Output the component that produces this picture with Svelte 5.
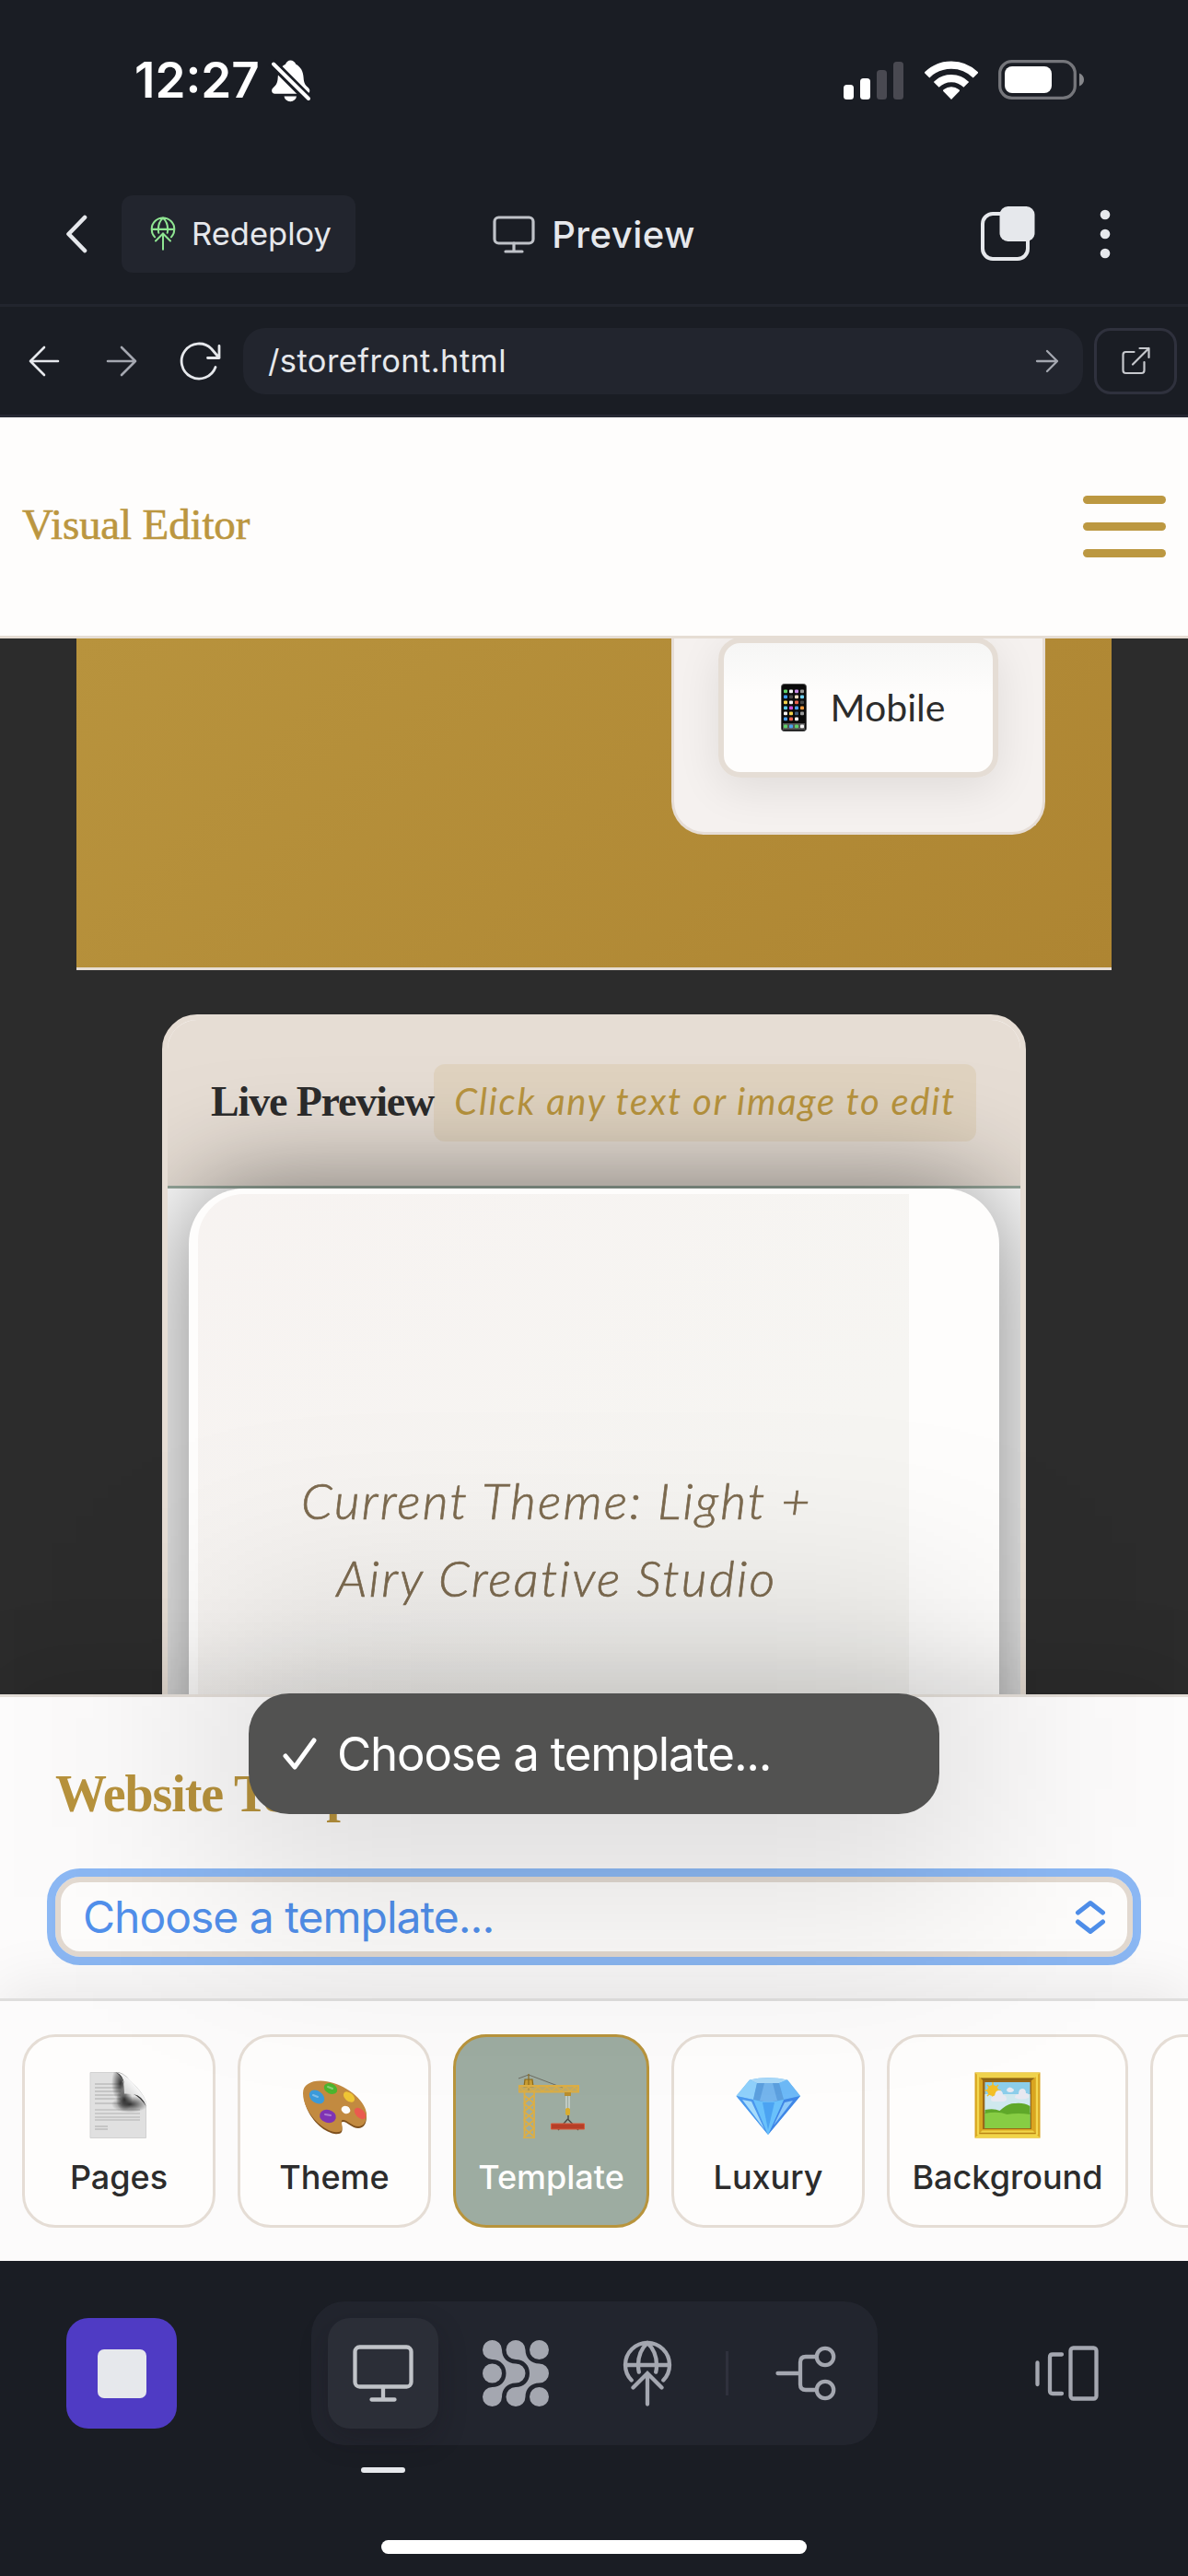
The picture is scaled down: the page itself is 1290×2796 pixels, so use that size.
<script>
  const tabs = [
    { label: 'Pages', icon: 'pages' },
    { label: 'Theme', icon: 'palette' },
    { label: 'Template', icon: 'crane', active: true },
    { label: 'Luxury', icon: 'gem' },
    { label: 'Background', icon: 'frame', wide: true },
    { label: '', icon: '' }
  ];

  // App colours on the phone's home screen, row by row
  const apps = [
    ['#5fd068', '#f4f4f4', '#c88be8', '#9a9a9a'],
    ['#3e9bf0', '#4a4a4a', '#f0dcc0', '#6fd0f0'],
    ['#f2d24b', '#f4f4f4', '#e8604c', '#4a4a4a'],
    ['#5ac8e8', '#d14bd8', '#4aa0f0', '#f09a3e'],
    ['#f4f4f4', '#f2d24b', '#3e5a78', '#9a9a9a'],
    ['#4aa0f0', '#e8604c', '#f4f4f4', '#0b0b0b'],
    ['#5fd068', '#4aa0f0', '#5fd068', '#f4f4f4']
  ];

  const letterLines = [13, 17, 21, 25, 29, 34, 41, 45, 49, 52, 59, 62];
</script>

{#snippet globe()}
  <path
    d="M9.7 43.5A24 24 0 1 1 44.3 43.5M3 27H51M27 3C20.5 9 17 17 17 27c0 3 .2 5.400.8 7.600M27 3c6.500 6 10 14 10 24c0 3-.2 5.400-.8 7.600M27 37V69.500M11.500 51.500L27 36l15.500 15.500"
  />
{/snippet}

<div class="screen">
  <header class="status">
    <span class="time">12:27</span>
    <svg class="bell" width="48" height="56" viewBox="0 0 48 56">
      <path
        fill="#fff"
        d="M25.300 5.500c2.800 0 5 1.800 6 4.200c5 2.600 8 7.500 8.300 14.500c.3 5.500 1.500 7.700 4.700 10.500c1.500 1.500 2 2.500 2 3.600c0 2-1.200 3.400-3.400 3.400H8.500c-2.200 0-3.400-1.400-3.400-3.400c0-1.200.6-2.300 2-3.600c3-2.800 4.300-5 4.600-10.500c.3-7 3.300-12 8.300-14.500c1-2.400 3-4.200 5.300-4.200zM18.500 44.500h13.500a6.800 6.500 0 0 1-13.500 0z"
      />
      <path d="M5 7.500L47 49.500" stroke="#1a1d24" stroke-width="10" />
      <path d="M7 9.500L45 47" stroke="#fff" stroke-width="4" stroke-linecap="round" />
    </svg>
    <span class="grow"></span>
    <svg width="66" height="44" viewBox="0 0 66 44">
      <rect x="0" y="27" width="11" height="16" rx="3.500" fill="#fff" />
      <rect x="18" y="20" width="11" height="23" rx="3.500" fill="#fff" />
      <rect x="36" y="11" width="11" height="32" rx="3.500" fill="#494951" />
      <rect x="54" y="2" width="11" height="41" rx="3.500" fill="#494951" />
    </svg>
    <svg class="wifi" width="58" height="44" viewBox="0 0 58 44">
      <g fill="none" stroke="#fff" stroke-width="8.200">
        <path d="M2.400 16.600A37.600 37.600 0 0 1 55.600 16.600" />
        <path d="M12.700 26.900A23 23 0 0 1 45.300 26.900" />
      </g>
      <path d="M29 43L20 33.800Q19.800 32.600 21 32a13.500 13.500 0 0 1 16 0Q38.200 32.600 38 33.800z" fill="#fff" />
    </svg>
    <svg width="94" height="44" viewBox="0 0 94 44">
      <rect x="1.700" y="1.700" width="81.600" height="39.600" rx="13" fill="none" stroke="#75767b" stroke-width="3.300" />
      <rect x="7" y="7" width="51" height="29" rx="8" fill="#fff" />
      <path d="M88 14.500c3.500 1.500 5 4 5 7s-1.500 5.500-5 7z" fill="#86878b" />
    </svg>
  </header>

  <nav class="appbar">
    <div class="side">
      <svg class="back" width="26" height="44" viewBox="0 0 26 44">
        <path d="M21 4L3.500 22L21 40" fill="none" stroke="#e6e8ec" stroke-width="4.600" stroke-linecap="round" stroke-linejoin="round" />
      </svg>
      <button class="redeploy">
        <svg width="28" height="37" viewBox="0 0 54 72" fill="none" stroke="#8fe592" stroke-width="3.900" stroke-linecap="round">
          {@render globe()}
        </svg>
        <span>Redeploy</span>
      </button>
    </div>
    <div class="title">
      <svg width="46" height="44" viewBox="0 0 46 44" fill="none" stroke="#bfc2c8" stroke-width="3.200" stroke-linecap="round">
        <rect x="2" y="4" width="42" height="28" rx="4.500" />
        <path d="M23 32v8M14 41h18" />
      </svg>
      <span>Preview</span>
    </div>
    <div class="side end">
      <svg width="62" height="64" viewBox="0 0 62 64">
        <rect x="4" y="10" width="49" height="49" rx="11" fill="none" stroke="#e6e8ec" stroke-width="4" />
        <rect x="22.500" y="2" width="38" height="38" rx="9" fill="#e6e8ec" />
      </svg>
      <svg class="dots" width="12" height="56" viewBox="0 0 12 56" fill="#e6e8ec">
        <circle cx="6" cy="7" r="5.300" />
        <circle cx="6" cy="28" r="5.300" />
        <circle cx="6" cy="49" r="5.300" />
      </svg>
    </div>
  </nav>

  <div class="urlbar">
    <svg width="34" height="34" viewBox="0 0 34 34" fill="none" stroke="#e6e8ec" stroke-width="2.600" stroke-linecap="round" stroke-linejoin="round">
      <path d="M32 17H2M17 2L2 17l15 15" />
    </svg>
    <svg class="fwd" width="34" height="34" viewBox="0 0 34 34" fill="none" stroke="#a4a7b0" stroke-width="2.600" stroke-linecap="round" stroke-linejoin="round">
      <path d="M2 17h30M17 2l15 15l-15 15" />
    </svg>
    <svg class="reload" width="46" height="42" viewBox="0 0 46 42" fill="none" stroke="#e6e8ec" stroke-width="2.800" stroke-linecap="round" stroke-linejoin="round">
      <path d="M39 27.500A19 19 0 1 1 34.500 7.500L43 17.500M43 4.500v13H30.500" />
    </svg>
    <div class="field">
      <span>/storefront.html</span>
      <svg width="26" height="26" viewBox="0 0 26 26" fill="none" stroke="#a4a7b0" stroke-width="2.300" stroke-linecap="round" stroke-linejoin="round">
        <path d="M2 13h22M13 2l11 11l-11 11" />
      </svg>
    </div>
    <button class="open" aria-label="Open in new tab">
      <svg width="32" height="32" viewBox="0 0 32 32" fill="none" stroke="#c6c8cd" stroke-width="2.200" stroke-linecap="round" stroke-linejoin="round">
        <path d="M14.500 6H5.500Q2.500 6 2.500 9V26Q2.500 29 5.500 29H22.500Q25.500 29 25.500 26V17M20.500 2h10v10M30.500 2L13 19.500" />
      </svg>
    </button>
  </div>

  <div class="editor-head">
    <span>Visual Editor</span>
    <div class="burger"><i></i><i></i><i></i></div>
  </div>

  <main class="canvas">
    <section class="hero">
      <div class="devices">
        <div class="device">
          <svg width="28" height="52" viewBox="0 0 28 52">
            <rect x=".5" y=".5" width="27" height="51" rx="3" fill="#0b0b0b" stroke="#555" />
            <rect x="2" y="43" width="24" height="7" fill="#555" />
            {#each apps as row, r}
              {#each row as colour, c}
                <rect x={3 + c * 6} y={6.500 + r * 6 + (r === 6 ? 2 : 0)} width="4" height="3.800" rx="1" fill={colour} />
              {/each}
            {/each}
          </svg>
          <span>Mobile</span>
        </div>
      </div>
    </section>

    <section class="preview">
      <div class="preview-head">
        <h2>Live Preview</h2>
        <em>Click any text or image to edit</em>
      </div>
      <div class="stage">
        <div class="phone">
          <div class="page">
            <p>Current Theme: Light +<br />Airy Creative Studio</p>
          </div>
        </div>
      </div>
    </section>
  </main>

  <section class="panel">
    <h3>Website Templates</h3>
    <div class="select">
      <span>Choose a template...</span>
      <svg width="34" height="38" viewBox="0 0 34 38" fill="none" stroke="#4f8fea" stroke-width="5" stroke-linecap="round" stroke-linejoin="round">
        <path d="M3.500 14L17 3.500L30.500 14M3.500 24L17 34.500L30.500 24" />
      </svg>
    </div>
    <div class="popup">
      <svg width="38" height="36" viewBox="0 0 38 36" fill="none" stroke="#fff" stroke-width="5" stroke-linecap="round" stroke-linejoin="round">
        <path d="M3 20l10 12L34 3" />
      </svg>
      <span>Choose a template...</span>
    </div>
  </section>

  <nav class="tabs">
    {#each tabs as tab}
      <div class="tab" class:active={tab.active} class:wide={tab.wide}>
        {#if tab.icon}
          <svg width="72" height="72" viewBox="0 0 72 72">
            {#if tab.icon === 'pages'}
              <defs>
                <linearGradient id="curl" x1="0" y1="1" x2="1" y2="0">
                  <stop offset="0" stop-color="#8a8a8a" />
                  <stop offset=".3" stop-color="#d2d2d2" />
                  <stop offset=".6" stop-color="#f6f6f6" />
                  <stop offset="1" stop-color="#cfcfcf" />
                </linearGradient>
                <radialGradient id="fold">
                  <stop offset="0" stop-color="#222" stop-opacity=".9" />
                  <stop offset="1" stop-color="#222" stop-opacity="0" />
                </radialGradient>
                <clipPath id="sheet"><path d="M5 0H36Q44 2 54 15T66 38V72H5z" /></clipPath>
              </defs>
              <path d="M5 .5H34Q42 2 54 15T65.500 36V71.500H5z" fill="#e0e0e0" stroke="#d2d2d2" stroke-width="1" />
              {#each letterLines as y}
                <path d="M10 {y}H{y < 36 ? 38 : y > 55 ? 24 : 59}" stroke="#b2b2b2" stroke-width="1.200" />
              {/each}
              <g clip-path="url(#sheet)">
                <ellipse cx="38" cy="12" rx="10" ry="20" fill="url(#fold)" />
                <ellipse cx="48" cy="35" rx="20" ry="9" fill="url(#fold)" />
                <ellipse cx="42" cy="30" rx="9" ry="12" fill="url(#fold)" />
              </g>
              <path d="M34 .5Q42 5 42 23.500Q60 23 65.500 36Q67 30 54 15T34 .5z" fill="url(#curl)" />
              <path d="M33 .5Q41 3 42 14Q40 5 33 .5zM52 24Q62 26 65.500 37Q60 28 52 24z" fill="#333" />
            {:else if tab.icon === 'palette'}
              <path d="M3 25C3 15 11 11 22 11C42 11 70 30 71 48C71 56 68 61 62 61C55 61 49 53 45 54C42 55 46 61 44 65C43 67 40 67.500 36 67C20 64 3 43 3 25z" fill="#7e501d" />
              <path d="M2 23C2 14 10 9.500 21 9.500C42 9.500 70 28 71 46C71 54 68 59 62 59C55 59 49 51 45 52C42 53 46 59 44 63C43 65 40 65.500 36 65C20 62 2 41 2 23z" fill="#c28a40" />
              <ellipse cx="48.500" cy="41" rx="5" ry="4" fill="#fdfcfb" transform="rotate(25 48.500 41)" />
              <ellipse cx="32" cy="18" rx="7.500" ry="5.500" fill="#4cb52e" transform="rotate(25 32 18)" />
              <ellipse cx="17" cy="27" rx="9" ry="6.500" fill="#3b9ada" transform="rotate(35 17 27)" />
              <ellipse cx="29" cy="48" rx="9" ry="7" fill="#7f33b4" transform="rotate(15 29 48)" />
              <ellipse cx="52" cy="27" rx="7" ry="4.500" fill="#efc534" transform="rotate(40 52 27)" />
              <ellipse cx="64" cy="45" rx="7.500" ry="4.500" fill="#ea5a4e" transform="rotate(45 64 45)" />
              <path d="M29 16l5 2M13 25l5 2M26 46l6 1" stroke="#fff" stroke-opacity=".35" stroke-width="2" stroke-linecap="round" />
            {:else if tab.icon === 'crane'}
              <path d="M0 7L11 3L48 17" fill="none" stroke="#6c6c62" stroke-width="1" />
              <path d="M11 2v18M7 8h8l1 8H6z" fill="#c79c34" stroke="#8a6a1e" stroke-width="1.200" />
              <path d="M0 15H65V21.500H0z" fill="#d9a93e" fill-opacity=".55" stroke="#dcae45" stroke-width="2" />
              <path d="M1 16l5 5l5-5l5 5l5-5l5 5l5-5l5 5l5-5l5 5l5-5l5 5l5-5l4 5" fill="none" stroke="#dcae45" stroke-width="1.200" />
              <path d="M6.500 21V72M17 21V72M6 25l11 9l-11 9l11 9l-11 9l11 9M17 25L6 34l11 9L6 52l11 9L6 70M5 71.500h13" fill="none" stroke="#dcae45" stroke-width="1.800" />
              <rect x="50" y="22" width="7" height="4" fill="#b98e2f" />
              <path d="M52 26V40M55 26V40" stroke="#d3dad6" stroke-width="1.300" />
              <rect x="51" y="39" width="5" height="8" rx="2" fill="#d8ac2e" />
              <path d="M54 47v5M53.500 51L43 63M53.500 51L65 63" fill="none" stroke="#4a4a44" stroke-width="1.400" />
              <path d="M35.500 56h36v6h-36z" fill="#b63f28" stroke="#d6583b" stroke-width="1" />
            {:else if tab.icon === 'gem'}
              <path d="M16 8.500Q36 4 57 8.500L71 26L36 68L1.500 26z" fill="#5eb2f6" />
              <path d="M16 8.500L24 12L20 30L1.500 26z" fill="#8fd0fb" />
              <path d="M16 8.500Q36 4 57 8.500L48 12H24z" fill="#a9d8f7" />
              <path d="M57 8.500L48 12L53 30L71 26z" fill="#6db9f7" />
              <path d="M24 12H48L53 30L36 33L20 30z" fill="#5c9fde" />
              <path d="M32 12L27 31L36 33L46 31L41 12z" fill="#74b4ec" />
              <path d="M1.500 26L20 30L36 68z" fill="#4a97ee" />
              <path d="M8 30l10 2l14 30z" fill="#a6dcfc" />
              <path d="M53 30L71 26L36 68z" fill="#3f86e6" />
              <path d="M54 33l9-2L42 58z" fill="#8cc9fa" />
              <path d="M20 30Q36 35 53 30L36 68z" fill="#69c1fb" />
              <path d="M30 33l6 30l7-30z" fill="#4ba3f2" />
            {:else}
              <rect x=".5" y=".5" width="71" height="71" fill="#d9a520" />
              <path d="M.5 .5h71l-6 6H6.500z" fill="#efd24c" />
              <path d="M6.500 6.500h59l-5.500 4H11z" fill="#8a6414" />
              <path d="M.5 71.500h71l-8-8H8.500z" fill="#f1d548" />
              <path d="M5 66.500h62" stroke="#b98514" stroke-width="1.300" />
              <path d="M4 3v65M68 3v65" stroke="#f3d750" stroke-width="2.400" />
              <rect x="9" y="9" width="53" height="53" fill="#9b6817" />
              <rect x="11.500" y="11" width="49" height="50" fill="#8ccdea" />
              <rect x="11.500" y="24" width="49" height="20" fill="#cfe8ee" />
              <circle cx="20" cy="20" r="6" fill="#f3bf27" />
              <path d="M20 11v18M11.500 20h17M14 14l12 12M26 14L14 26" stroke="#f3bf27" stroke-width="1.500" />
              <path d="M18 30q0-4 4-4q1-7 5-6q4 0 4 5q4 0 4 5q-1 2-4 2h-9q-4 0-4-2zM44 28q0-4 4-4q0-6 4-6q4 0 4 5q4 0 3 5q-8 3-15 0zM35 19q3-5 8 0q0 3-4 3q-4 0-4-3z" fill="#e8e8f0" />
              <path d="M11.500 41q10-2 16 1q10-9 17-8q9-1 16 3V61h-49z" fill="#5fa829" />
              <path d="M11.500 45q14-3 24 1q12-2 25 0V61h-49z" fill="#87cd44" />
            {/if}
          </svg>
          <span>{tab.label}</span>
        {/if}
      </div>
    {/each}
  </nav>

  <footer class="dock">
    <button class="stop" aria-label="Stop"><i></i></button>
    <div class="group">
      <div class="tool selected">
        <svg width="66" height="62" viewBox="0 0 66 62" fill="none" stroke="#c0c3c8" stroke-width="4.300" stroke-linecap="round">
          <rect x="2.500" y="2.500" width="61" height="43" rx="5" />
          <path d="M33 46v13M20.500 59.500h25" />
        </svg>
      </div>
      <div class="tool">
        <svg width="72" height="72" viewBox="0 0 72 72" fill="#a4a7b0">
          <path id="strand" d="M10.500 0A10.500 10.500 0 0 1 21 10.500C21 19 27 25.500 36 25.500A10.500 10.500 0 0 1 36 46.500C27 46.500 21 53 21 61.500A10.500 10.500 0 1 1 10.500 51C19 51 25.500 45 25.500 36C25.500 27 19 21 10.500 21A10.500 10.500 0 0 1 10.500 0z" />
          <use href="#strand" x="25.500" />
          <circle cx="10.500" cy="36" r="10.500" />
          <circle cx="61.500" cy="10.500" r="10.500" />
          <circle cx="61.500" cy="61.500" r="10.500" />
        </svg>
      </div>
      <div class="tool">
        <svg width="54" height="72" viewBox="0 0 54 72" fill="none" stroke="#a4a7b0" stroke-width="4.300" stroke-linecap="round">
          {@render globe()}
        </svg>
      </div>
      <span class="rule"></span>
      <div class="tool">
        <svg width="66" height="60" viewBox="0 0 66 60" fill="none" stroke="#a4a7b0" stroke-width="4.300" stroke-linecap="round">
          <path d="M2.500 30H27M44 12H33q-6 0-6 6V42q0 6 6 6H44" />
          <circle cx="54" cy="12" r="9.200" />
          <circle cx="54" cy="48" r="9.200" />
        </svg>
      </div>
    </div>
    <svg class="panels" width="70" height="60" viewBox="0 0 70 60" fill="none" stroke="#a4a7b0" stroke-width="4.300" stroke-linecap="round">
      <path d="M3.500 18.500V42M30 9.500H20q-3 0-3 3V49q0 3 3 3H30" />
      <rect x="39.500" y="2.500" width="28" height="55" rx="3" />
    </svg>
    <span class="marker"></span>
    <span class="home"></span>
  </footer>
</div>

<style>
  :global(body) {
    background: #1a1d24;
  }
  .screen {
    width: 1290px;
    height: 2796px;
    display: flex;
    flex-direction: column;
    overflow: hidden;
    background: #1a1d24;
    font-family: Inter, 'Liberation Sans', sans-serif;
  }
  .screen :global(*) {
    box-sizing: border-box;
  }
  svg {
    display: block;
    flex: none;
  }
  button {
    border: 0;
    padding: 0;
    font: inherit;
    color: inherit;
    background: none;
  }

  .status {
    height: 178px;
    flex: none;
    display: flex;
    align-items: center;
    padding: 0 112px 4px 146px;
  }
  .time {
    width: 144px;
    font-size: 53px;
    font-weight: 600;
    line-height: 60px;
    color: #fff;
  }
  .bell {
    margin-top: 2px;
  }
  .grow {
    flex: 1;
  }
  .wifi {
    margin: 0 22px;
  }

  .appbar {
    height: 155px;
    flex: none;
    display: flex;
    align-items: center;
    border-bottom: 3px solid #22252e;
  }
  .side {
    flex: 1;
    display: flex;
    align-items: center;
  }
  .back {
    margin: 0 35px 0 71px;
  }
  .redeploy {
    width: 254px;
    height: 84px;
    border-radius: 12px;
    background: #22252e;
    display: flex;
    align-items: center;
    padding: 0 0 2px 31px;
    gap: 17px;
    color: #e6e8ec;
    font-size: 34.500px;
  }
  .title {
    display: flex;
    align-items: center;
    gap: 18px;
    color: #e6e8ec;
    font-size: 40px;
    font-weight: 500;
    letter-spacing: 0.5px;
  }
  .title svg {
    margin-top: -1px;
  }
  .end {
    justify-content: flex-end;
  }
  .dots {
    margin: 0 84px 0 69px;
  }

  .urlbar {
    height: 120px;
    flex: none;
    display: flex;
    align-items: center;
    padding: 0 12px 0 31px;
    border-bottom: 3px solid #262833;
  }
  .fwd {
    margin-left: 50px;
  }
  .reload {
    margin: 0 23px 0 46px;
  }
  .field {
    flex: 1;
    height: 72px;
    border-radius: 24px;
    background: #22252e;
    display: flex;
    align-items: center;
    justify-content: space-between;
    padding: 0 26px 0 27px;
    color: #e6e8ec;
    font-size: 34.500px;
    letter-spacing: 0.4px;
  }
  .open {
    width: 90px;
    height: 72px;
    margin-left: 12px;
    border: 3px solid #2f313d;
    border-radius: 18px;
    display: flex;
    align-items: center;
    justify-content: center;
  }

  .editor-head {
    height: 240px;
    flex: none;
    display: flex;
    align-items: center;
    justify-content: space-between;
    padding: 0 24px;
    background: #fefdfc;
    border-bottom: 3px solid #e6ddd4;
    color: #bb9640;
    font: 400 47px/60px 'Liberation Serif', serif;
    letter-spacing: -0.150px;
    -webkit-text-stroke: 0.6px #bb9640;
  }
  .editor-head span {
    padding-bottom: 6px;
  }
  .burger {
    width: 90px;
    display: grid;
    gap: 20px;
    padding-bottom: 1px;
  }
  .burger i {
    height: 9px;
    border-radius: 5px;
    background: #bc9841;
  }

  .canvas {
    height: 1146px;
    flex: none;
    overflow: hidden;
    background: #2c2c2c;
    display: flex;
    flex-direction: column;
    align-items: center;
  }
  .hero {
    width: 1124px;
    height: 360px;
    flex: none;
    display: flex;
    justify-content: flex-end;
    align-items: flex-start;
    padding-right: 72px;
    background: linear-gradient(135deg, #b8933d, #ae8532);
    border-bottom: 3px solid #e6ddd4;
  }
  .devices {
    width: 406px;
    height: 213px;
    background: #f5f1ef;
    border: 3px solid #e6ddd6;
    border-top: 0;
    border-radius: 0 0 36px 36px;
    display: flex;
    justify-content: center;
    align-items: flex-start;
    overflow: hidden;
  }
  .device {
    width: 304px;
    height: 152px;
    margin-top: -1px;
    border: 6px solid #e5ddd5;
    border-radius: 24px;
    background: linear-gradient(#f6f6f5, #fefdfc 40%);
    box-shadow: 0 12px 48px rgba(0, 0, 0, 0.09);
    display: flex;
    align-items: center;
    justify-content: center;
    gap: 26px;
    padding-left: 10px;
    color: #2c2c2c;
    font: 400 41px/50px Lato, sans-serif;
  }

  .preview {
    width: 938px;
    height: 1300px;
    margin-top: 48px;
    flex: none;
    overflow: hidden;
    border: 6px solid #e6ddd4;
    border-radius: 38px 38px 0 0;
    background: #fefefe;
  }
  .preview-head {
    height: 183px;
    padding: 3px 48px 0;
    display: flex;
    align-items: center;
    justify-content: space-between;
    background: #e6ddd4;
    border-bottom: 3px solid #96a79b;
  }
  h2 {
    margin: -6px 0 0 -1px;
    flex: none;
    color: #2c2c2c;
    font: 700 46px/60px 'Liberation Serif', serif;
    letter-spacing: -1.150px;
  }
  em {
    height: 84px;
    width: 589px;
    flex: none;
    margin: -3px 1px 0 0;
    border-radius: 12px;
    background: rgba(184, 147, 61, 0.13);
    color: #b8943e;
    text-align: center;
    white-space: nowrap;
    font: italic 400 40px/80px Lato, sans-serif;
    letter-spacing: 1.700px;
  }
  .stage {
    display: flex;
    justify-content: center;
  }
  .phone {
    width: 880px;
    height: 1200px;
    flex: none;
    padding: 6px 0 0 10px;
    border-radius: 60px 60px 0 0;
    background: #fefdfc;
    box-shadow: 0 0 120px rgba(0, 0, 0, 0.5);
    overflow: hidden;
  }
  .page {
    width: 772px;
    height: 1194px;
    border-radius: 50px 0 0 0;
    background: linear-gradient(135deg, #f7f3f1, #f6f5f2 50%);
    padding-top: 291px;
  }
  .page p {
    margin: 0;
    padding-left: 7px;
    text-align: center;
    color: #7d6b50;
    font: italic 300 54px/84px Lato, sans-serif;
    letter-spacing: 2.200px;
    -webkit-text-stroke: 0.7px #7d6b50;
  }

  .panel {
    position: relative;
    height: 330px;
    flex: none;
    padding: 72px 51px 0;
    background: #fcfbfb;
    border-top: 3px solid #e3ddd7;
    box-shadow: 0 -12px 96px rgba(0, 0, 0, 0.12);
  }
  h3 {
    margin: 0 0 51px 9px;
    color: #b8933d;
    font: 700 56px/66px 'Liberation Serif', serif;
    letter-spacing: -1.100px;
  }
  .select {
    height: 105px;
    border: 9px solid #8cb8f4;
    border-radius: 36px;
    margin-top: -3px;
    background: #fefdfc;
    box-shadow: inset 0 0 0 6px #e3dad1;
    display: flex;
    align-items: center;
    justify-content: space-between;
    padding: 0 29px 0 30px;
    color: #5190ec;
    font-size: 48px;
    letter-spacing: -1px;
  }
  .popup {
    position: absolute;
    z-index: 1;
    left: 270px;
    top: -4px;
    width: 750px;
    height: 131px;
    display: flex;
    align-items: center;
    gap: 21px;
    padding-left: 37px;
    color: #fff;
    font-size: 51px;
    letter-spacing: -1.200px;
  }
  /* wide ambient shadow under the menu */
  .popup::before {
    content: '';
    position: absolute;
    z-index: -2;
    inset: -90px -40px;
    background: rgba(0, 0, 0, 0.12);
    filter: blur(110px);
  }
  .popup::after {
    content: '';
    position: absolute;
    z-index: -1;
    inset: 0;
    border-radius: 44px;
    background: #525251;
  }

  .tabs {
    position: relative;
    height: 285px;
    flex: none;
    display: flex;
    gap: 24px;
    padding: 36px 0 0 24px;
    background: #fcfbfb;
    border-top: 3px solid #dfdedd;
    box-shadow: 0 -12px 60px rgba(0, 0, 0, 0.08);
  }
  .tab {
    width: 210px;
    height: 210px;
    flex: none;
    display: flex;
    flex-direction: column;
    align-items: center;
    gap: 20px;
    padding-top: 38px;
    border: 3px solid #e5ddd5;
    border-radius: 36px;
    background: #fefdfc;
    color: #2c2c2c;
    font-size: 36px;
    line-height: 44px;
    font-weight: 500;
  }
  .tab.active {
    width: 213px;
    border-color: #b8943c;
    background: #9daca1;
    color: #fefdfc;
  }
  .tab.wide {
    width: 262px;
  }

  .dock {
    position: relative;
    z-index: 2;
    height: 342px;
    flex: none;
    display: flex;
    align-items: flex-start;
    background: #1a1d24;
    padding: 44px 97px 0 72px;
  }
  .stop {
    width: 120px;
    height: 120px;
    margin-top: 18px;
    border-radius: 24px;
    background: #4f3bc4;
    display: flex;
    align-items: center;
    justify-content: center;
  }
  .stop i {
    width: 53px;
    height: 53px;
    border-radius: 7px;
    background: #e6e8ec;
  }
  .group {
    width: 615px;
    height: 156px;
    margin-left: 146px;
    border-radius: 36px;
    background: #22252e;
    display: flex;
    align-items: center;
    padding: 0 18px;
  }
  .tool {
    width: 120px;
    height: 120px;
    border-radius: 24px;
    display: flex;
    align-items: center;
    justify-content: center;
  }
  .tool + .tool {
    margin-left: 24px;
  }
  .selected {
    background: #2b2e37;
    box-shadow: 0 12px 30px rgba(20, 16, 24, 0.25);
  }
  .rule {
    width: 3px;
    height: 48px;
    margin: 0 24px 0 25px;
    background: #2f313d;
  }
  .panels {
    margin: 48px 0 0 auto;
  }
  .marker {
    position: absolute;
    left: 392px;
    top: 224px;
    width: 48px;
    height: 6px;
    border-radius: 3px;
    background: #e6e8ec;
  }
  .home {
    position: absolute;
    left: 414px;
    top: 303px;
    width: 462px;
    height: 15px;
    border-radius: 8px;
    background: #fff;
  }
</style>
